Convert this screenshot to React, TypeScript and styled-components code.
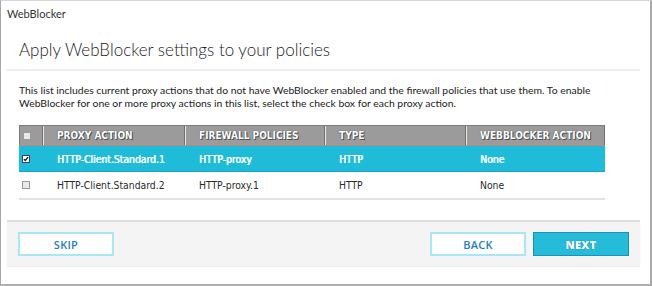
import styled, { createGlobalStyle } from "styled-components";

const Global = createGlobalStyle`
  body {
    margin: 0;
    background: #fff;
  }
`;

const Janela = styled.div`
  box-sizing: border-box;
  width: 652px;
  height: 286px;
  border-top: 1px solid #d6d6d6;
  border-left: 1px solid #a8a8a8;
  border-right: 2px solid #a8a8a8;
  border-bottom: 2px solid #b0b0b0;
  display: flex;
  flex-direction: column;
  padding: 0 10px 0 6px;
`;

const Legenda = styled.div`
  font-family: Lato, "Liberation Sans", sans-serif;
  font-size: 11px;
  color: #333;
  padding: 6px 0 0 0;
  height: 16px;
`;

const Titulo = styled.h1`
  margin: 16px 0 0 12px;
  font-family: Lato, "Liberation Sans", sans-serif;
  font-weight: 300;
  font-size: 17px;
  line-height: 22px;
  color: #222;
`;

const Divisor = styled.div`
  height: 2px;
  background: #eeeeee;
  margin-top: 8px;
`;

const Descricao = styled.p`
  margin: 13px 0 0 12px;
  font-family: Lato, "Liberation Sans", sans-serif;
  font-size: 10.4px;
  line-height: 13px;
  color: #222;
`;

const Tabela = styled.div`
  margin: 15px 0 0 12px;
  width: 586px;
  border-bottom: 2px solid #e2e2e2;
`;

const colunas = "24px 142px 140px 141px 139px";

const Cabecalho = styled.div`
  display: grid;
  grid-template-columns: ${colunas};
  height: 19px;
  background: #9b9b9b;
  border-top: 1px solid #7a7a7a;
  border-bottom: 1px solid #b88a80;
`;

const CelulaCabecalho = styled.div<{ $primeira?: boolean }>`
  display: flex;
  align-items: center;
  min-width: 0;
  white-space: nowrap;
  padding-left: ${(p) => (p.$primeira ? "3px" : "13px")};
  border-left: ${(p) => (p.$primeira ? "1px solid #7a7a7a" : "1px solid #e8e8e8")};
  border-right: 1px solid #6f6f6f;
  font-family: "DejaVu Sans Condensed", "DejaVu Sans", Verdana, sans-serif;
  font-stretch: semi-condensed;
  font-weight: bold;
  font-size: 10px;
  color: #fff;
  text-shadow: 0 0 1px #333, 1px 1px 0 #555;
`;

const Linha = styled.div<{ $selecionada?: boolean }>`
  display: grid;
  grid-template-columns: ${colunas};
  height: 25px;
  background: ${(p) => (p.$selecionada ? "#1fbcd9" : "#fff")};
  border-bottom: 1px solid ${(p) => (p.$selecionada ? "#1aa5c4" : "#fff")};
  color: ${(p) => (p.$selecionada ? "#fff" : "#2a2a2a")};
  text-shadow: ${(p) => (p.$selecionada ? "0.6px 0 0 #fff" : "none")};
`;

const Celula = styled.div<{ $primeira?: boolean }>`
  display: flex;
  align-items: center;
  min-width: 0;
  white-space: nowrap;
  padding-left: ${(p) => (p.$primeira ? "3px" : "14px")};
  font-family: "DejaVu Sans Condensed", "DejaVu Sans", Verdana, sans-serif;
  font-stretch: semi-condensed;
  font-size: 10.3px;
`;

const Caixa = styled.span<{ $marcada?: boolean }>`
  box-sizing: border-box;
  width: 8px;
  height: 8px;
  border: 1px solid ${(p) => (p.$marcada ? "#3a3a7a" : "#9a9a9a")};
  background: ${(p) => (p.$marcada ? "#fff" : "#e8e8e8")};
  display: flex;
  align-items: center;
  justify-content: center;
`;

const Rodape = styled.div`
  margin-top: 20px;
  height: 44px;
  background: #f4f4f4;
  border-top: 2px solid #dedede;
  box-shadow: 0 1px 1px #ececec;
  display: flex;
  align-items: center;
  padding: 0 11px;
`;

const Espaco = styled.div`
  flex: 1;
`;

const Botao = styled.button<{ $primario?: boolean }>`
  box-sizing: border-box;
  width: 96px;
  height: 24px;
  margin-left: ${(p) => (p.$primario ? "7px" : "0")};
  background: ${(p) => (p.$primario ? "#25bcd9" : "#fff")};
  border: ${(p) => (p.$primario ? "1px solid #1592c2" : "2px solid #a6e8f5")};
  color: ${(p) => (p.$primario ? "#fff" : "#1c7fc0")};
  font-family: "Open Sans", "Liberation Sans", sans-serif;
  font-weight: ${(p) => (p.$primario ? "800" : "600")};
  font-size: 11px;
  letter-spacing: 0.3px;
  text-shadow: ${(p) => (p.$primario ? "0 0 1px #1b6e95" : "none")};
  padding: 0;
  cursor: pointer;
`;

interface IAcao {
  proxy: string;
  politica: string;
  tipo: string;
  acao: string;
  marcada: boolean;
}

const acoes: IAcao[] = [
  { proxy: "HTTP-Client.Standard.1", politica: "HTTP-proxy", tipo: "HTTP", acao: "None", marcada: true },
  { proxy: "HTTP-Client.Standard.2", politica: "HTTP-proxy.1", tipo: "HTTP", acao: "None", marcada: false },
];

function Check({ marcada }: { marcada?: boolean }) {
  return (
    <Caixa $marcada={marcada}>
      {marcada && (
        <svg width="8" height="8" viewBox="0 0 8 8">
          <path d="M1.2 4.2 L3 6 L6.8 1.6" fill="none" stroke="#111" strokeWidth="1.6" />
        </svg>
      )}
    </Caixa>
  );
}

export default function App() {
  return (
    <>
      <Global />
      <Janela>
        <Legenda>WebBlocker</Legenda>
        <Titulo>Apply WebBlocker settings to your policies</Titulo>
        <Divisor />
        <Descricao>
          This list includes current proxy actions that do not have WebBlocker enabled and the firewall policies that use them. To enable
          <br />
          WebBlocker for one or more proxy actions in this list, select the check box for each proxy action.
        </Descricao>
        <Tabela>
          <Cabecalho>
            <CelulaCabecalho $primeira>
              <Check />
            </CelulaCabecalho>
            <CelulaCabecalho>PROXY ACTION</CelulaCabecalho>
            <CelulaCabecalho>FIREWALL POLICIES</CelulaCabecalho>
            <CelulaCabecalho>TYPE</CelulaCabecalho>
            <CelulaCabecalho>WEBBLOCKER ACTION</CelulaCabecalho>
          </Cabecalho>
          {acoes.map((a) => (
            <Linha key={a.proxy} $selecionada={a.marcada}>
              <Celula $primeira>
                <Check marcada={a.marcada} />
              </Celula>
              <Celula>{a.proxy}</Celula>
              <Celula>{a.politica}</Celula>
              <Celula>{a.tipo}</Celula>
              <Celula>{a.acao}</Celula>
            </Linha>
          ))}
        </Tabela>
        <Rodape>
          <Botao>SKIP</Botao>
          <Espaco />
          <Botao>BACK</Botao>
          <Botao $primario>NEXT</Botao>
        </Rodape>
      </Janela>
    </>
  );
}
